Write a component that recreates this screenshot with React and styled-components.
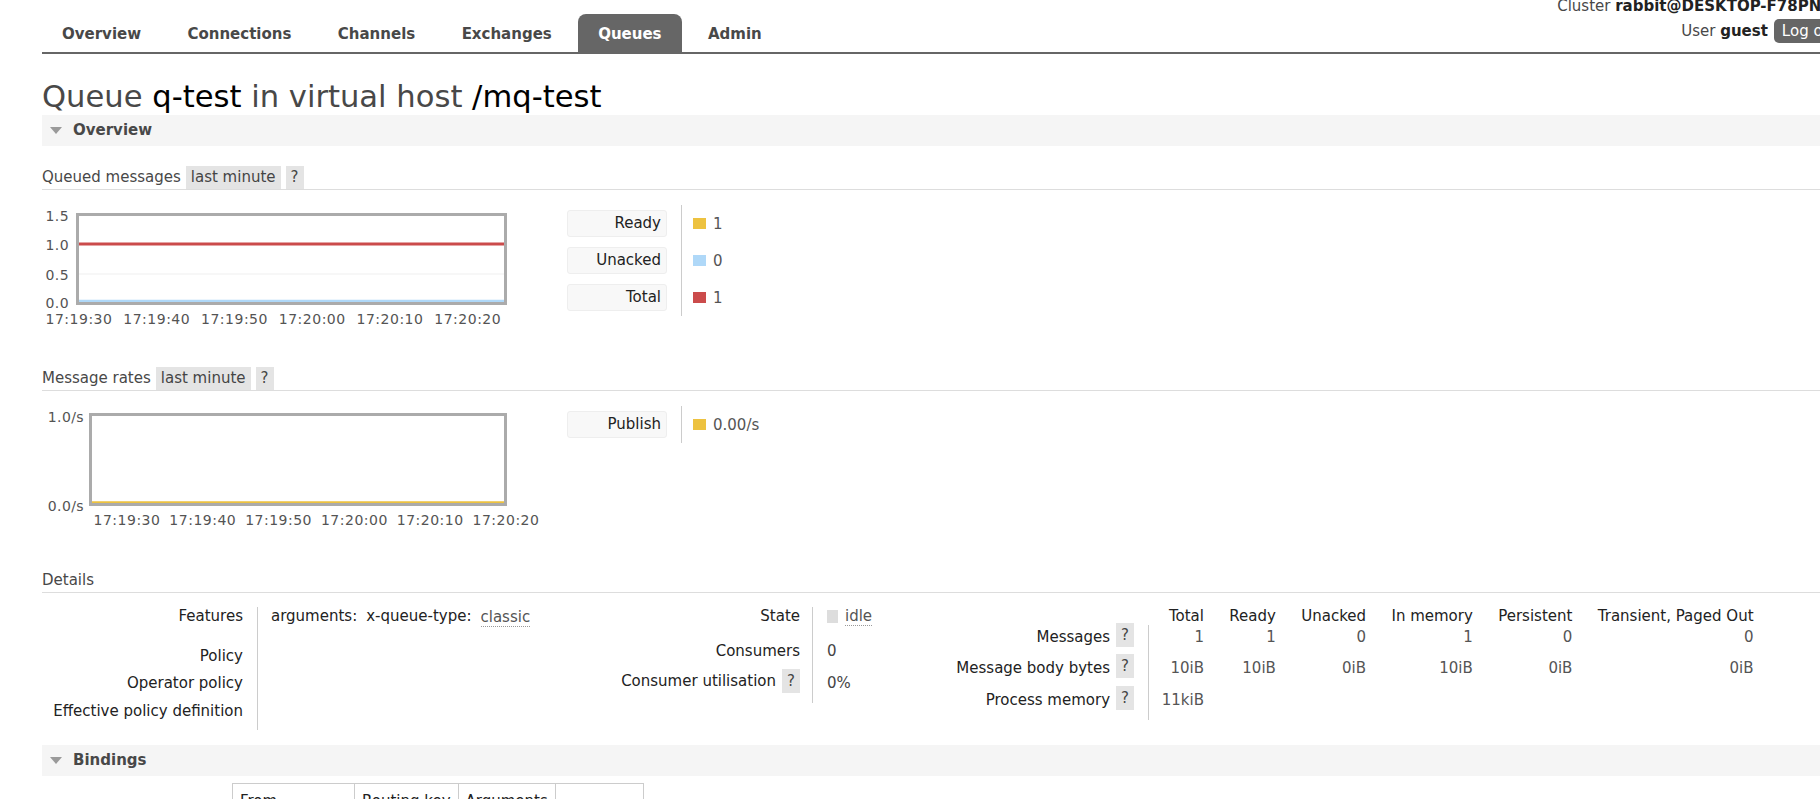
import React from 'react';
import styled, { createGlobalStyle } from 'styled-components';

const GlobalStyle = createGlobalStyle`
  html, body { margin: 0; padding: 0; background: #fff; overflow: hidden; }
  body {
    font-family: "DejaVu Sans", Verdana, sans-serif;
    font-size: 15px;
    line-height: 18px;
    color: #484848;
  }
  * { box-sizing: border-box; }
`;

const Page = styled.div`
  padding-left: 42px;
  margin-right: -26px;
`;

/* ---------- header ---------- */
const TopBar = styled.header`
  display: flex;
  justify-content: space-between;
  align-items: flex-end;
  height: 54px;
  border-bottom: 2px solid #666;
`;

const Nav = styled.nav`
  display: flex;
  gap: 6.4px;
`;

const NavTab = styled.a`
  display: block;
  padding: 11px 20px 9px;
  line-height: 18px;
  font-weight: bold;
  text-decoration: none;
  color: ${(p) => (p.$active ? '#fff' : '#484848')};
  background: ${(p) => (p.$active ? '#666' : 'transparent')};
  border-radius: 8px 8px 0 0;
`;

const UserBlock = styled.div`
  align-self: flex-start;
  margin-top: -3px;
  display: flex;
  flex-direction: column;
  align-items: flex-end;
  white-space: nowrap;
`;

const ClusterLine = styled.div`
  line-height: 18px;
  color: #484848;
  b { color: #222; }
`;

const UserLine = styled.div`
  margin-top: 4px;
  display: flex;
  align-items: center;
  gap: 6px;
  color: #484848;
  b { color: #222; }
`;

const LogoutButton = styled.span`
  display: inline-block;
  height: 24px;
  line-height: 24px;
  padding: 0 8px;
  background: #666;
  color: #fff;
  border-radius: 5px;
`;

/* ---------- title / sections ---------- */
const Title = styled.h1`
  margin: 25px 0 0;
  font-size: 30.6px;
  line-height: 36px;
  font-weight: normal;
  color: #484848;
  white-space: nowrap;
  b { font-weight: normal; color: #000; }
`;

const Band = styled.div`
  display: flex;
  align-items: center;
  gap: 11px;
  height: 31px;
  line-height: 31px;
  padding-left: 8px;
  margin-top: ${(p) => p.$mt || 0}px;
  background: #f5f5f5;
  font-weight: bold;
  color: #484848;
`;

const Caret = styled.svg`
  display: block;
  flex: none;
`;

const SubHeading = styled.div`
  display: flex;
  align-items: stretch;
  gap: 5px;
  height: 24px;
  line-height: 23px;
  margin-top: ${(p) => p.$mt || 0}px;
  border-bottom: 1px solid #ddd;
  color: #484848;
  white-space: nowrap;
`;

const HeadTag = styled.span`
  display: block;
  height: 23px;
  padding: 0 5px;
  background: #e4e4e4;
  color: #444;
`;

/* ---------- charts ---------- */
const ChartRow = styled.div`
  display: flex;
  align-items: flex-start;
  margin-top: 15px;
`;

const ChartSvg = styled.svg`
  display: block;
  flex: none;
  font-family: "DejaVu Sans", Verdana, sans-serif;
`;

const Legend = styled.div`
  display: flex;
  align-items: stretch;
`;

const LegendLabels = styled.div`
  display: flex;
  flex-direction: column;
  gap: 10px;
  padding: 5px 0;
  width: 100px;
`;

const LegendLabel = styled.div`
  height: 27px;
  line-height: 25px;
  padding-right: 5px;
  text-align: right;
  background: #f8f8f8;
  border: 1px solid #eee;
  border-radius: 3px;
  color: #222;
`;

const LegendValues = styled.div`
  display: flex;
  flex-direction: column;
  gap: 10px;
  margin-left: 14px;
  padding: 5px 0 5px 11px;
  border-left: 1px solid #ccc;
`;

const LegendValue = styled.div`
  display: flex;
  align-items: center;
  gap: 7px;
  height: 27px;
  color: #555;
`;

const Swatch = styled.span`
  display: block;
  width: 13px;
  height: 11px;
  background: ${(p) => p.$color};
`;

/* ---------- details ---------- */
const DetailsRow = styled.div`
  display: flex;
  align-items: flex-start;
  margin-top: 14px;
`;

const FactsGrid = styled.div`
  display: grid;
  flex: none;
  grid-template-columns: ${(p) => p.$cols};
  grid-template-rows: ${(p) => p.$rows};
`;

const FactLabel = styled.div`
  display: flex;
  justify-content: flex-end;
  align-items: flex-start;
  gap: 6px;
  padding: ${(p) => p.$pt || 0}px ${(p) => p.$pr ?? 14}px 0 0;
  border-right: ${(p) => (p.$plain ? 'none' : '1px solid #ccc')};
  color: #222;
  white-space: nowrap;
`;

const FactValue = styled.div`
  display: flex;
  align-items: ${(p) => (p.$center ? 'center' : 'flex-start')};
  gap: ${(p) => p.$gap || 9}px;
  padding: ${(p) => p.$pt || 0}px 0 0 ${(p) => p.$pl ?? 14}px;
  color: ${(p) => p.$color || '#444'};
  white-space: nowrap;
  align-self: start;
  height: 18px;
`;

const StatCell = styled.div`
  padding: ${(p) => p.$pt || 0}px 12.7px 0;
  text-align: right;
  color: ${(p) => (p.$head ? '#222' : '#555')};
  white-space: nowrap;
`;

const Help = styled.span`
  display: inline-block;
  flex: none;
  height: 24px;
  line-height: 24px;
  padding: 0 5px;
  margin-top: ${(p) => p.$mt || 0}px;
  background: #e4e4e4;
  color: #444;
`;

const Dotted = styled.span`
  display: inline-block;
  line-height: 17px;
  margin-top: ${(p) => p.$mt || 0}px;
  color: #555;
  border-bottom: 1px dotted #999;
`;

const StateSquare = styled.span`
  display: block;
  width: 11px;
  height: 13px;
  background: #ddd;
`;

/* ---------- bindings ---------- */
const BindingsTable = styled.table`
  margin: 7px 0 0 190px;
  border-collapse: collapse;
  border: 1px solid #ccc;
`;

const BindTh = styled.th`
  width: ${(p) => p.$w}px;
  padding: 8px 7px;
  border: 1px solid #ccc;
  font-weight: normal;
  text-align: left;
  color: #222;
  white-space: nowrap;
`;

/* ---------- data ---------- */
const tabs = ['Overview', 'Connections', 'Channels', 'Exchanges', 'Queues', 'Admin'];
const times = ['17:19:30', '17:19:40', '17:19:50', '17:20:00', '17:20:10', '17:20:20'];

const queuedChart = {
  width: 525,
  height: 125,
  plot: { x: 35.5, y: 9.5, w: 428, h: 89 },
  grid: [69],
  series: [
    { y: 96, color: '#afd8f8', w: 2.5 },
    { y: 39, color: '#cb4b4b', w: 3 },
  ],
  yLabelX: 27,
  yLabels: [['1.5', 16], ['1.0', 44.7], ['0.5', 74.7], ['0.0', 102.8]],
  xLabels: { start: 37, step: 77.75, y: 118.5 },
};

const ratesChart = {
  width: 525,
  height: 125,
  plot: { x: 48.5, y: 8.5, w: 415, h: 90 },
  grid: [],
  series: [{ y: 96.5, color: '#edc240', w: 2.5 }],
  yLabelX: 42,
  yLabels: [['1.0/s', 16], ['0.0/s', 104.5]],
  xLabels: { start: 85, step: 75.8, y: 119.2 },
};

function Chart({ c }) {
  const x1 = c.plot.x + 1.5;
  const x2 = c.plot.x + c.plot.w - 1.5;
  return (
    <ChartSvg width={c.width} height={c.height} viewBox={`0 0 ${c.width} ${c.height}`}>
      {c.grid.map((gy) => (
        <line key={gy} x1={x1} x2={x2} y1={gy} y2={gy} stroke="#efefef" strokeWidth="1" />
      ))}
      {c.series.map((s, i) => (
        <line key={i} x1={x1} x2={x2} y1={s.y} y2={s.y} stroke={s.color} strokeWidth={s.w} />
      ))}
      <rect x={c.plot.x} y={c.plot.y} width={c.plot.w} height={c.plot.h} fill="none" stroke="#ababab" strokeWidth="3" />
      {c.yLabels.map(([t, y]) => (
        <text key={t} x={c.yLabelX} y={y} textAnchor="end" fontSize="14" letterSpacing="0.4" fill="#545454">
          {t}
        </text>
      ))}
      {times.map((t, i) => (
        <text
          key={t}
          x={c.xLabels.start + i * c.xLabels.step}
          y={c.xLabels.y}
          textAnchor="middle"
          fontSize="14"
          letterSpacing="0.5"
          fill="#545454"
        >
          {t}
        </text>
      ))}
    </ChartSvg>
  );
}

function SectionBand({ label, mt }) {
  return (
    <Band $mt={mt}>
      <Caret width="12" height="7" viewBox="0 0 12 7">
        <polygon points="0,0 12,0 6,7" fill="#9a9a9a" />
      </Caret>
      {label}
    </Band>
  );
}

function ChartLegend({ items }) {
  return (
    <Legend>
      <LegendLabels>
        {items.map((it) => (
          <LegendLabel key={it.label}>{it.label}</LegendLabel>
        ))}
      </LegendLabels>
      <LegendValues>
        {items.map((it) => (
          <LegendValue key={it.label}>
            <Swatch $color={it.color} />
            {it.value}
          </LegendValue>
        ))}
      </LegendValues>
    </Legend>
  );
}

const statHeads = ['Total', 'Ready', 'Unacked', 'In memory', 'Persistent', 'Transient, Paged Out'];
const statRows = [
  { label: 'Messages', values: ['1', '1', '0', '1', '0', '0'] },
  { label: 'Message body bytes', values: ['10iB', '10iB', '0iB', '10iB', '0iB', '0iB'] },
  { label: 'Process memory', values: ['11kiB', '', '', '', '', ''] },
];

export default function App() {
  return (
    <>
      <GlobalStyle />
      <Page>
        <TopBar>
          <Nav>
            {tabs.map((t) => (
              <NavTab key={t} $active={t === 'Queues'}>
                {t}
              </NavTab>
            ))}
          </Nav>
          <UserBlock>
            <ClusterLine>
              Cluster <b>rabbit@DESKTOP-F78PNHU</b>
            </ClusterLine>
            <UserLine>
              <span>
                User <b>guest</b>
              </span>
              <LogoutButton>Log out</LogoutButton>
            </UserLine>
          </UserBlock>
        </TopBar>

        <Title>
          Queue <b>q-test</b> in virtual host <b>/mq-test</b>
        </Title>

        <SectionBand label="Overview" />

        <SubHeading $mt={20}>
          Queued messages
          <HeadTag>last minute</HeadTag>
          <HeadTag>?</HeadTag>
        </SubHeading>
        <ChartRow>
          <Chart c={queuedChart} />
          <ChartLegend
            items={[
              { label: 'Ready', color: '#edc240', value: '1' },
              { label: 'Unacked', color: '#afd8f8', value: '0' },
              { label: 'Total', color: '#cb4b4b', value: '1' },
            ]}
          />
        </ChartRow>

        <SubHeading $mt={37}>
          Message rates
          <HeadTag>last minute</HeadTag>
          <HeadTag>?</HeadTag>
        </SubHeading>
        <ChartRow>
          <Chart c={ratesChart} />
          <ChartLegend items={[{ label: 'Publish', color: '#edc240', value: '0.00/s' }]} />
        </ChartRow>

        <SubHeading $mt={38}>Details</SubHeading>
        <DetailsRow>
          <FactsGrid $cols="216px 350px" $rows="40px 27px 28px 28px">
            <FactLabel>Features</FactLabel>
            <FactValue $pl={13} $color="#222">
              <span>arguments:</span>
              <span>x-queue-type:</span>
              <Dotted $mt={2}>classic</Dotted>
            </FactValue>
            <FactLabel>Policy</FactLabel>
            <FactValue />
            <FactLabel>Operator policy</FactLabel>
            <FactValue />
            <FactLabel>Effective policy definition</FactLabel>
            <FactValue />
          </FactsGrid>

          <FactsGrid $cols="205px 131px" $rows="35px 29px 32px">
            <FactLabel $pr={12}>State</FactLabel>
            <FactValue $center $gap={7} $pt={1}>
              <StateSquare />
              <Dotted>idle</Dotted>
            </FactValue>
            <FactLabel $pr={12}>Consumers</FactLabel>
            <FactValue>0</FactValue>
            <FactLabel $pr={12} $pt={1}>
              Consumer utilisation
              <Help $mt={-3}>?</Help>
            </FactLabel>
            <FactValue $pt={3}>0%</FactValue>
          </FactsGrid>

          <FactsGrid $cols="205px repeat(6, auto)" $rows="18px 31px 32px 32px">
            <FactLabel $plain />
            {statHeads.map((h) => (
              <StatCell key={h} $head>
                {h}
              </StatCell>
            ))}
            {statRows.map((r) => (
              <React.Fragment key={r.label}>
                <FactLabel $pt={3}>
                  {r.label}
                  <Help $mt={-5}>?</Help>
                </FactLabel>
                {r.values.map((v, i) => (
                  <StatCell key={i} $pt={3}>
                    {v}
                  </StatCell>
                ))}
              </React.Fragment>
            ))}
          </FactsGrid>
        </DetailsRow>

        <SectionBand label="Bindings" mt={15} />
        <BindingsTable>
          <thead>
            <tr>
              <BindTh $w={122}>From</BindTh>
              <BindTh $w={102}>Routing key</BindTh>
              <BindTh $w={96}>Arguments</BindTh>
              <BindTh $w={88} />
            </tr>
          </thead>
        </BindingsTable>
      </Page>
    </>
  );
}
